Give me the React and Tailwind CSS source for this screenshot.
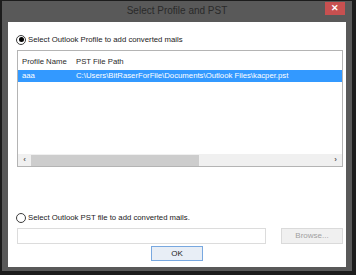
import React from 'react';

const Radio = ({ checked }) => (
  <span className="w-[10px] h-[10px] rounded-full border border-[#3c3c3c] bg-white flex items-center justify-center shrink-0">
    {checked && <span className="w-[5px] h-[5px] rounded-full bg-black" />}
  </span>
);

const App = () => {
  return (
    <div className="w-[356px] h-[275px] bg-[#1c1c1c] pt-[1px] pl-[2px] pr-[4px] pb-[4px] font-['Liberation_Sans',sans-serif]">
      <div className="w-full h-full bg-[#595959] flex flex-col px-[6px] pb-[4px]">
        {/* title bar */}
        <div className="h-[21px] flex items-start relative shrink-0">
          <div className="flex-1 text-center text-[10px] leading-[19px] text-[#2a2a2a]">
            Select Profile and PST
          </div>
          <div className="absolute right-[1px] top-[1px] w-[20px] h-[13px] bg-[#c75050] flex items-center justify-center text-white text-[9px] font-bold leading-none">
            ✕
          </div>
        </div>

        {/* content */}
        <div className="flex-1 bg-white flex flex-col pl-[9px] pr-[3px] pt-[12px] text-[7.75px] text-[#1a1a1a]">
          <div className="h-[11px] flex items-center gap-[2px] -ml-[1px]">
            <Radio checked />
            <span>Select Outlook Profile to add converted mails</span>
          </div>

          <div className="mt-[5px] h-[117px] border border-[#b4b4b4] flex flex-col">
            <div className="h-[19px] flex items-center pt-[3px] text-[#2a2a2a]">
              <span className="w-[58px] pl-[4px]">Profile Name</span>
              <span>PST File Path</span>
            </div>
            <div className="h-[12px] bg-[#3399ff] flex items-center text-white">
              <span className="w-[58px] pl-[4px]">aaa</span>
              <span>C:\Users\BitRaserForFile\Documents\Outlook Files\kacper.pst</span>
            </div>
            <div className="flex-1" />
            <div className="h-[12px] bg-[#f0f0f0] flex items-center">
              <span className="w-[13px] flex justify-center text-[8px] font-bold text-[#606060]">‹</span>
              <div className="w-[168px] h-[11px] bg-[#cdcdcd]" />
              <div className="flex-1" />
              <span className="w-[13px] flex justify-center text-[8px] font-bold text-[#606060]">›</span>
            </div>
          </div>

          <div className="mt-[45px] h-[11px] flex items-center gap-[2px] -ml-[1px]">
            <Radio />
            <span>Select Outlook PST file to add converted mails.</span>
          </div>

          <div className="mt-[5px] flex items-center">
            <div className="w-[249px] h-[16px] border border-[#dcdcdc] bg-white" />
            <div className="flex-1" />
            <button className="w-[62px] h-[16px] border border-[#dadada] bg-[#f0f0f0] text-[#a0a0a0] text-[8px] leading-none">
              Browse...
            </button>
          </div>

          <div className="mt-[2px] flex justify-center -ml-[6px]">
            <button className="w-[52px] h-[15px] border border-[#78a8e0] bg-[#e8eef6] text-[8px] leading-none text-[#222]">
              OK
            </button>
          </div>
        </div>
      </div>
    </div>
  );
};

export default App;
